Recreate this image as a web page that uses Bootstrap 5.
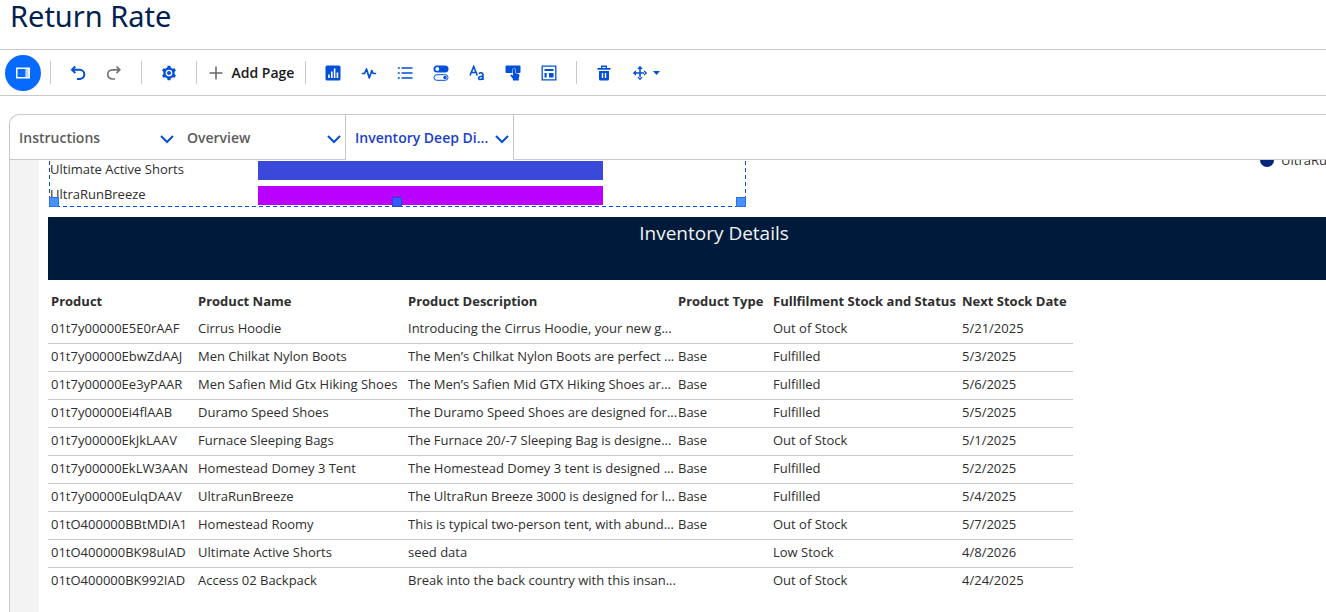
<!DOCTYPE html>
<html lang="en">
<head>
<meta charset="utf-8">
<meta name="viewport" content="width=device-width, initial-scale=1">
<title>Return Rate</title>
<link href="https://cdn.jsdelivr.net/npm/bootstrap@5.3.0/dist/css/bootstrap.min.css" rel="stylesheet">
<style>
  body { font-family: "Open Sans", "Noto Sans", sans-serif; font-size: 13px; line-height: 18px; color: #2e2e2e; }
  .page-title { font-size: 29px; line-height: 32px; height: 49px; padding: 0 10px; color: #00204d; font-family: "Noto Sans", "Open Sans", sans-serif; }
  .tools { height: 47px; border-top: 1px solid #c9c9c9; border-bottom: 1px solid #c9c9c9; padding-left: 5px; }
  .tools .btn { --bs-btn-border-width: 0; width: 36px; height: 36px; padding: 0; color: #0250d9; border-radius: 4px; display: flex; align-items: center; justify-content: center; flex-shrink: 0; }
  .tools .btn svg { width: 16px; height: 16px; }
  .tools .btn.panel-toggle { background: #066afe; border-radius: 50%; }
  .tools .btn.redo-btn { color: #747474; }
  .tools .btn.add-page { width: 108px; color: #181818; gap: 8px; font-size: 14px; font-weight: 600; }
  .tools .btn.move-btn { width: 48px; gap: 5px; }
  .tools .btn.move-btn .caret { width: 7px; height: 4px; }
  .rule { width: 1px; height: 23px; margin: 0 9px; background: #c9c9c9; flex-shrink: 0; }
  .rule.before-add { margin-right: 0; }
  .rule.after-add { margin-left: 0; }
  .board { margin: 18px 0 0 9px; border: 1px solid #c9c9c9; border-width: 1px 0 0 1px; border-top-left-radius: 10px; overflow: hidden; }
  .page-tabs { height: 45px; flex-shrink: 0; }
  .page-tab { width: 168px; padding: 2px 4px 0 9px; font-size: 14px; font-weight: 600; color: #5c5c5c; border-bottom: 1px solid #c9c9c9; white-space: nowrap; }
  .page-tab a { color: inherit; }
  .page-tab button { color: #0250d9; line-height: 0; padding: 2px 0 0; }
  .page-tab.before { border-right: 1px solid #c9c9c9; }
  .page-tab.current { color: #1a3fc9; border-right: 1px solid #c9c9c9; border-bottom-color: #fff; }
  .tab-filler { border-bottom: 1px solid #c9c9c9; }
  .gutter { width: 29px; background: #f3f3f3; flex-shrink: 0; }
  .canvas { padding-left: 9px; overflow: hidden; min-width: 0; }
  .chart { width: 697px; height: 47px; margin-left: 1px; padding: 1px 0 0 1px; flex-shrink: 0; position: relative;
    background:
      repeating-linear-gradient(90deg, #0250d9 0 4px, transparent 4px 7px) bottom / 100% 1px no-repeat,
      repeating-linear-gradient(0deg, #0250d9 0 4px, transparent 4px 7px) left / 1px 100% no-repeat,
      repeating-linear-gradient(0deg, #0250d9 0 4px, transparent 4px 7px) right / 1px 100% no-repeat; }
  .chart-row { height: 19px; margin-bottom: 6px; }
  .chart-label { width: 208px; padding-bottom: 3px; flex-shrink: 0; }
  .chart-bar { width: 345px; height: 19px; }
  .grip { position: absolute; bottom: 0; width: 10px; height: 10px; background: #4791ff; border: 1px solid #2a72e8; }
  .grip-mid { left: 343px; background: #3859ff; border-color: #2647d8; }
  .legend-item { height: 14px; margin: -7px 0 0 514px; gap: 7px; white-space: nowrap; width: 100px; flex-shrink: 0; }
  .legend-dot { width: 14px; height: 14px; border-radius: 50%; background: #03257a; flex-shrink: 0; }
  .banner { height: 63px; margin: 10px -54px 0 0; padding-top: 3px; background: #001a3b; color: #f3f3f3; font-size: 19px; line-height: 27px; }
  .stock { width: 1025px; table-layout: fixed; margin: 7px 0 0; color: #2e2e2e; border-collapse: collapse; }
  .stock tr > * { height: 28px; padding: 0 0 2px 3px; vertical-align: middle; white-space: nowrap; border-bottom: 1px solid #c9c9c9; line-height: 18px; }
  .stock thead tr > *, .stock tbody tr:last-child > * { border-bottom: 0; }
  .stock thead th { font-weight: 700; padding-bottom: 0; }
</style>
</head>
<body class="vh-100 d-flex flex-column overflow-hidden bg-white">
<h1 class="page-title fw-normal m-0 flex-shrink-0">Return Rate</h1>

<div class="tools d-flex align-items-center flex-shrink-0" role="toolbar" aria-label="Dashboard tools">
  <button class="btn panel-toggle" aria-label="Toggle panel"><svg viewBox="0 0 16 16"><path fill="#fff" fill-rule="evenodd" d="M1 2.500h14v11H1zM2.500 4v8h8V4z"/><path fill="#b9d6ff" d="M11 4h2.500v8H11z"/></svg></button>
  <span class="rule"></span>
  <button class="btn" aria-label="Undo"><svg viewBox="0 0 16 16" fill="none" stroke="currentColor" stroke-width="2"><path d="M5.300 1.500 2 4.800l3.300 3.300M2 4.800h7.700a4.600 4.600 0 0 1 0 9.200H7"/></svg></button>
  <button class="btn redo-btn" aria-label="Redo"><svg viewBox="0 0 16 16" fill="none" stroke="currentColor" stroke-width="1.700"><path d="m10.500 1.500 3.300 3.300-3.300 3.300M14 4.800H6.300a4.600 4.600 0 0 0 0 9.200H9"/></svg></button>
  <span class="rule"></span>
  <button class="btn" aria-label="Settings"><svg viewBox="0 0 16 16" fill="currentColor"><circle cx="8" cy="8" r="5.700"/><path id="tooth" d="M6 4.200 6.600.8h2.800l.6 3.400z"/><use href="#tooth" transform="rotate(60 8 8)"/><use href="#tooth" transform="rotate(120 8 8)"/><use href="#tooth" transform="rotate(180 8 8)"/><use href="#tooth" transform="rotate(240 8 8)"/><use href="#tooth" transform="rotate(300 8 8)"/><circle cx="8" cy="8" r="2.700" fill="none" stroke="#fff" stroke-width="1.300"/></svg></button>
  <span class="rule before-add"></span>
  <button class="btn add-page"><svg viewBox="0 0 16 16" stroke="#666" stroke-width="1.500"><path d="M8 1.500v13M1.500 8h13"/></svg>Add Page</button>
  <span class="rule after-add"></span>
  <button class="btn" aria-label="Chart"><svg viewBox="0 0 16 16"><rect x=".5" y=".5" width="15" height="15" rx="1.500" fill="currentColor"/><path stroke="#fff" stroke-width="1.600" d="M4 13V9.500M6.800 13V6.500M9.600 13V3.500M12.400 13V7.500"/></svg></button>
  <button class="btn" aria-label="Metric"><svg viewBox="0 0 16 16" fill="none" stroke="currentColor" stroke-width="1.700" stroke-linejoin="round"><path d="M.8 8.500h2.700l2-4.500 2.800 9 2.500-7.500 1.300 3h3.100"/></svg></button>
  <button class="btn" aria-label="List"><svg viewBox="0 0 16 16" stroke="currentColor" stroke-width="1.600"><path d="M.8 3h2M4.500 3h11M.8 8h2M4.500 8h11M.8 13h2M4.500 13h11"/></svg></button>
  <button class="btn" aria-label="Toggle"><svg viewBox="0 0 16 16"><rect x=".5" y=".5" width="15" height="7" rx="3.500" fill="currentColor"/><circle cx="4.300" cy="4" r="1.900" fill="#fff"/><rect x="1" y="9.700" width="14" height="5.600" rx="2.800" fill="none" stroke="currentColor"/><circle cx="12" cy="12.500" r="1.700" fill="currentColor"/></svg></button>
  <button class="btn" aria-label="Text"><svg viewBox="0 0 16 16" fill="none" stroke="currentColor" stroke-width="1.600"><path d="M1 10.500 4.700 1.500 8.300 10.500M2.200 7.500h5M9.800 8.600c1.500-1.300 4.200-1 4.200 1.200V15M14 11.300c-3.200-.2-4.400.6-4.400 1.800 0 2 3.600 2 4.400-.5"/></svg></button>
  <button class="btn" aria-label="Button"><svg viewBox="0 0 16 16" fill="currentColor"><rect x=".5" y=".5" width="15" height="7.500" rx="1"/><path stroke="#fff" stroke-width="1" paint-order="stroke" d="M8 4.500q0-1.200 1.100-1.200t1.100 1.200v3.600l3.300.8q1.100.3 1 1.400l-.7 3v2.200H7.900v-1.700L5.400 10.800q-.3-1 .8-1.200l1.800 1z"/></svg></button>
  <button class="btn" aria-label="Container"><svg viewBox="0 0 16 16"><path fill="none" stroke="currentColor" stroke-width="1.300" d="M1.200 1.200h13.600v13.600H1.200z"/><path fill="currentColor" d="M3.500 4h9v2h-9zM3.500 8h2.200v4.500H3.500zM8 8h4.500v4.500H8z"/></svg></button>
  <span class="rule"></span>
  <button class="btn" aria-label="Delete"><svg viewBox="0 0 16 16"><path fill="none" stroke="currentColor" stroke-width="1.400" d="M5.700 3.500V1.300h4.600v2.200"/><path fill="currentColor" fill-rule="evenodd" d="M1.500 3h13v1.800h-13zM3 6h10v8q0 1.500-1.500 1.500h-7Q3 15.500 3 14zm2.800 2v5h1.400V8zm3 0v5h1.400V8z"/></svg></button>
  <button class="btn move-btn" aria-label="Move"><svg viewBox="0 0 16 16" fill="currentColor"><path d="M7.200 3h1.600v4.200H13v1.600H8.800V13H7.200V8.800H3V7.200h4.200zM8 .8l2.800 3.200H5.200zM8 15.200l2.800-3.200H5.200zM.8 8 4 5.200v5.600zM15.200 8 12 5.200v5.600z"/></svg><svg class="caret" viewBox="0 0 7 4" fill="currentColor"><path d="M0 0h7L3.500 4z"/></svg></button>
</div>

<main class="board d-flex flex-column flex-grow-1">
  <nav class="page-tabs d-flex" aria-label="Pages">
    <div class="page-tab d-flex align-items-center justify-content-between">
      <a class="text-decoration-none" href="#instructions">Instructions</a>
      <button class="border-0 bg-transparent" aria-label="Instructions menu"><svg width="14" height="9" viewBox="0 0 14 9" fill="none" stroke="currentColor" stroke-width="2"><path d="m1 1 6 6 6-6"/></svg></button>
    </div>
    <div class="page-tab before d-flex align-items-center justify-content-between">
      <a class="text-decoration-none" href="#overview">Overview</a>
      <button class="border-0 bg-transparent" aria-label="Overview menu"><svg width="14" height="9" viewBox="0 0 14 9" fill="none" stroke="currentColor" stroke-width="2"><path d="m1 1 6 6 6-6"/></svg></button>
    </div>
    <div class="page-tab current d-flex align-items-center justify-content-between">
      <a class="text-decoration-none" href="#inventory" aria-current="page">Inventory Deep Di...</a>
      <button class="border-0 bg-transparent" aria-label="Inventory menu"><svg width="14" height="9" viewBox="0 0 14 9" fill="none" stroke="currentColor" stroke-width="2"><path d="m1 1 6 6 6-6"/></svg></button>
    </div>
    <div class="tab-filler flex-grow-1"></div>
  </nav>

  <div class="d-flex flex-grow-1 overflow-hidden">
    <div class="gutter"></div>
    <div class="canvas flex-grow-1">
      <div class="d-flex">
        <div class="chart">
          <div class="chart-row d-flex align-items-center"><span class="chart-label">Ultimate Active Shorts</span><div class="chart-bar" style="background:#3a49da"></div></div>
          <div class="chart-row d-flex align-items-center"><span class="chart-label">UltraRunBreeze</span><div class="chart-bar" style="background:#ba01ff"></div></div>
          <span class="grip start-0"></span><span class="grip grip-mid"></span><span class="grip end-0"></span>
        </div>
        <div class="legend-item d-flex align-items-center"><span class="legend-dot"></span>UltraRunBreeze</div>
      </div>
      <h2 class="banner text-center fw-normal mb-0">Inventory Details</h2>
      <table class="stock">
        <colgroup><col style="width:147px"><col style="width:210px"><col style="width:270px"><col style="width:95px"><col style="width:189px"><col style="width:114px"></colgroup>
        <thead><tr><th>Product</th><th>Product Name</th><th>Product Description</th><th>Product Type</th><th>Fullfilment Stock and Status</th><th>Next Stock Date</th></tr></thead>
        <tbody>
          <tr><td>01t7y00000E5E0rAAF</td><td>Cirrus Hoodie</td><td>Introducing the Cirrus Hoodie, your new g...</td><td></td><td>Out of Stock</td><td>5/21/2025</td></tr>
          <tr><td>01t7y00000EbwZdAAJ</td><td>Men Chilkat Nylon Boots</td><td>The Men’s Chilkat Nylon Boots are perfect ...</td><td>Base</td><td>Fulfilled</td><td>5/3/2025</td></tr>
          <tr><td>01t7y00000Ee3yPAAR</td><td>Men Safien Mid Gtx Hiking Shoes</td><td>The Men’s Safien Mid GTX Hiking Shoes ar...</td><td>Base</td><td>Fulfilled</td><td>5/6/2025</td></tr>
          <tr><td>01t7y00000Ei4flAAB</td><td>Duramo Speed Shoes</td><td>The Duramo Speed Shoes are designed for...</td><td>Base</td><td>Fulfilled</td><td>5/5/2025</td></tr>
          <tr><td>01t7y00000EkJkLAAV</td><td>Furnace Sleeping Bags</td><td>The Furnace 20/-7 Sleeping Bag is designe...</td><td>Base</td><td>Out of Stock</td><td>5/1/2025</td></tr>
          <tr><td>01t7y00000EkLW3AAN</td><td>Homestead Domey 3 Tent</td><td>The Homestead Domey 3 tent is designed ...</td><td>Base</td><td>Fulfilled</td><td>5/2/2025</td></tr>
          <tr><td>01t7y00000EulqDAAV</td><td>UltraRunBreeze</td><td>The UltraRun Breeze 3000 is designed for l...</td><td>Base</td><td>Fulfilled</td><td>5/4/2025</td></tr>
          <tr><td>01tO400000BBtMDIA1</td><td>Homestead Roomy</td><td>This is typical two-person tent, with abund...</td><td>Base</td><td>Out of Stock</td><td>5/7/2025</td></tr>
          <tr><td>01tO400000BK98uIAD</td><td>Ultimate Active Shorts</td><td>seed data</td><td></td><td>Low Stock</td><td>4/8/2026</td></tr>
          <tr><td>01tO400000BK992IAD</td><td>Access 02 Backpack</td><td>Break into the back country with this insan...</td><td></td><td>Out of Stock</td><td>4/24/2025</td></tr>
        </tbody>
      </table>
    </div>
  </div>
</main>
<script src="https://cdn.jsdelivr.net/npm/bootstrap@5.3.0/dist/js/bootstrap.bundle.min.js"></script>
</body>
</html>
